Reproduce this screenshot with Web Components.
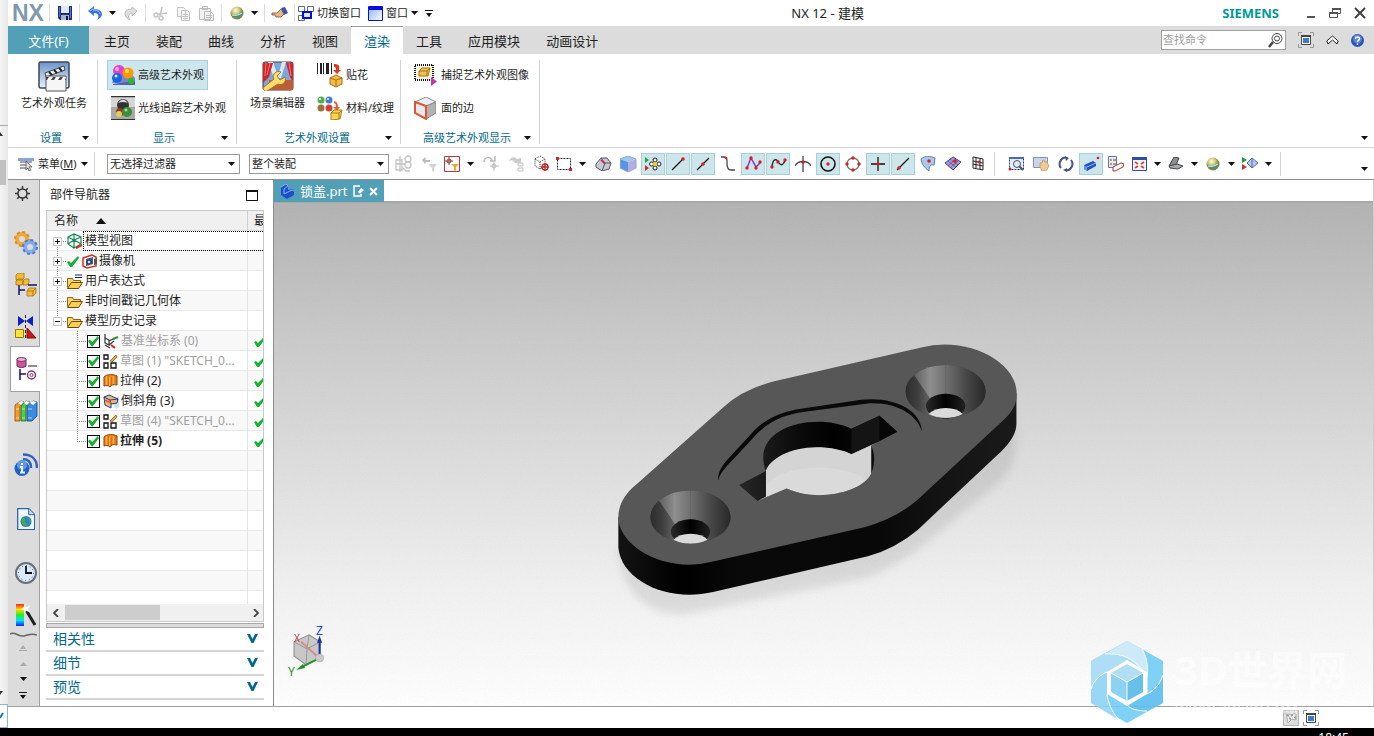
<!DOCTYPE html>
<html lang="zh-CN">
<head>
<meta charset="utf-8">
<title>NX 12 - 建模</title>
<style>
  html, body {
    margin: 0;
    height: 100%;
  }

  body {
    --teal: #529fb8;
    --link: #00688b;
    --bar: #dcdcdc;
    --line: #d4d4d4;
    --hot: #cde6eb;
    --hot-edge: #a6d1dc;
    font: 12px/16px "Noto Sans", "Noto Sans CJK SC", sans-serif;
    color: #1e1e1e;
    background: #000;
    overflow: hidden;
  }
</style>
</head>
<body>
<nx-desktop></nx-desktop>

<script>
// name: [width, height, markup]
const ICONS = {
  caret: [7, 4, '<path d="M0 0h7L3.500 4z" fill="#111"/>'],
  caretUp: [7, 4, '<path d="M0 4h7L3.500 0z" fill="#aaa"/>'],
  sortUp: [10, 6, '<path d="M0 6h10L5 0z" fill="#111"/>'],
  overflow: [8, 7, '<path d="M0 0h8v1H0zM1 3h6L4 7z" fill="#111"/>'],
  overflowUp: [8, 6, '<path d="M0 5h8v1H0zM1 4h6L4 0z" fill="#aaa"/>'],
  save: [14, 14, '<path d="M0 0h14v14H2l-2-2z" fill="#1c2c80"/><path d="M3 0h8v7H3z" fill="#dfe9f8"/><path d="M1 1h1v10H1zM12 1h1v11h-1z" fill="#5878d8"/><path d="M3 9h8v5H3z" fill="#a9b4c8"/><path d="M8 10h2v4H8z" fill="#10184a"/>'],
  undo: [14, 14, '<path d="M0 5l6-5v3c6 0 8 3 8 5 0 3-3 5-5 6 3-4 1-7-3-7v3z" fill="#3a78d8"/><path d="M2 5l3-2v1c5 0 7 2 7 4" fill="none" stroke="#9cc4f6"/>'],
  redo: [14, 14, '<path d="M13 5L8 1v2C3 3 1 5 1 8c0 3 3 5 5 6-3-4-1-7 2-7v3z" fill="#dedede" stroke="#bbb"/>'],
  cut: [15, 15, '<g fill="none" stroke="#c6c6c6" stroke-width="1.500"><circle cx="3" cy="9" r="2"/><circle cx="8" cy="12" r="2"/><path d="M5 8l9-1M7 10L9 1"/></g>'],
  copy: [15, 15, '<g fill="#f5f5f5" stroke="#c2c2c2"><path d="M1.500 1.500h6l2 2v7h-8zM5.500 4.500h6l2 2v8h-8z"/><path d="M7 8.500h5M7 10.500h5M7 12.500h5"/></g>'],
  paste: [15, 15, '<g fill="#f2f2f2" stroke="#bcbcbc"><path d="M.5 2.500h11v11H.5zM3.500.5h5v3h-5zM5.500 5.500h6l3 3v6h-9z"/><path d="M7 9.500h6M7 11.500h6"/></g>'],
  sphere: [14, 14, '<defs><radialGradient id="g" cx=".4" cy=".3"><stop offset="0" stop-color="#fffce0"/><stop offset=".6" stop-color="#c8c870"/><stop offset="1" stop-color="#85853c"/></radialGradient></defs><circle cx="7" cy="7" r="6.500" fill="url(#g)"/><path d="M1 8c4 2 8 1 12-2-1 2-1 3-2 4-3 3-7 2-10-2z" fill="#3f8f9a"/><path d="M2 9c4 1 7 0 10-2" stroke="#d8f2ee" fill="none"/>'],
  hand: [17, 12, '<path d="M10 1l4-1 3 6-4 2z" fill="#3454b4"/><path d="M1 6h5l4-4 3 5-3 3H5L4 8H1z" fill="#e6b98a" stroke="#7d4c28" stroke-width=".8"/>'],
  switchWin: [16, 15, '<g fill="#fff" stroke="#556a94"><path d="M.5.5h6v5h-6zM9.500.5h6v5h-6zM.5 9.500h6v5h-6z"/></g><path d="M5 6h8v6H5z" fill="#dfe8ff" stroke="#0010e0" stroke-width="2"/>'],
  window: [15, 15, '<defs><linearGradient id="g" x2="1" y2="1"><stop offset="0" stop-color="#86aef0"/><stop offset="1" stop-color="#fff"/></linearGradient></defs><path d="M.5.5h14v14H.5z" fill="url(#g)" stroke="#0010e0"/><path d="M1 1h13v3H1z" fill="#0010e0"/>'],
  minimize: [9, 12, '<path d="M0 9h8v2H0z" fill="#555"/>'],
  restore: [12, 11, '<g fill="#fff" stroke="#555"><path d="M3.500.5h8v5h-8z"/><path d="M.5 4.500h8v5h-8z"/></g><path d="M3 0h9v2H3zM0 4h9v2H0z" fill="#555"/>'],
  close: [12, 12, '<path d="M1 1l10 10M11 1L1 11" stroke="#444" stroke-width="2"/>'],
  search: [15, 15, '<g fill="none" stroke="#444"><circle cx="9" cy="5.500" r="5"/><circle cx="9" cy="5.500" r="2.500"/></g><path d="M5 9l-4 5" stroke="#444" stroke-width="2.500"/>'],
  fullscreen: [16, 16, '<path d="M.5 4V.5H4M12 .5h3.500V4M15.500 12v3.500H12M4 15.500H.5V12" fill="none" stroke="#999"/><path d="M3.500 3.500h9v9h-9z" fill="#fff" stroke="#444"/><path d="M3 3h10v2H3z" fill="#444"/><path d="M5 6h6v5H5z" fill="#3d79c8"/>'],
  collapse: [13, 10, '<path d="M.8 6l5.700-5 5.700 5-1.200 3-4.500-4L2 9z" fill="#fff" stroke="#222"/>'],
  help: [13, 13, '<circle cx="6.500" cy="6.500" r="6.500" fill="#2c53b8"/><circle cx="6.500" cy="5" r="4.500" fill="#5681da"/><path d="M4.500 5c0-3 4.500-2.500 4 0-.3 1.300-2 1.300-2 3M6.500 9.500v1.500" fill="none" stroke="#fff" stroke-width="1.500"/>'],

  artTask: [32, 31, '<defs><linearGradient id="g" y2="1" x2="0"><stop offset="0" stop-color="#6a94cc"/><stop offset="1" stop-color="#e8f2fc"/></linearGradient></defs><rect x="1" y="1" width="30" height="26" rx="2" fill="url(#g)" stroke="#3f4756" stroke-width="1.500"/><path d="M7 12L26 5l1 4-19 7z" fill="#eee" stroke="#444"/><path d="M11 11l3 3M16 9l3 3M21 7l3 3" stroke="#222" stroke-width="2"/><path d="M8 15h20v15H8z" fill="#f6f6f6" stroke="#555"/><path d="M8 16h20v3H8z" fill="#444"/><path d="M11 16l-2 3h4l2-3zM18 16l-2 3h4l2-3zM25 16l-2 3h4l1-3z" fill="#fff"/>'],
  artAdv: [24, 22, '<path d="M1 19l5-11 10-3 8 9v6z" fill="#7986c9"/><path d="M2 20l22-3v4H2z" fill="#5360aa"/><circle cx="8" cy="7" r="6" fill="#df42c4"/><circle cx="6" cy="5" r="2" fill="#ff9bef"/><circle cx="17" cy="9" r="5.500" fill="#ff9800"/><circle cx="16" cy="7" r="2" fill="#ffe35c"/><circle cx="6" cy="14" r="5" fill="#1565e4"/><circle cx="5" cy="12" r="1.500" fill="#cce8ff"/><circle cx="20" cy="17" r="3" fill="#20c020"/>'],
  rayTrace: [24, 24, '<path d="M0 0h24v24H0z" fill="#a9a9a9"/><path d="M0 2h24v9H0z" fill="#d6d6d6"/><path d="M0 0h24v1H0zM0 23h24v1H0z" fill="#333"/><circle cx="12" cy="9" r="6" fill="#333"/><path d="M7 7q5-7 10 0-5-2-10 0z" fill="#ddd"/><circle cx="9" cy="16" r="4" fill="#9b332b"/><circle cx="16" cy="16" r="5" fill="#3c8e3c"/><circle cx="8" cy="18" r="3" fill="#e4cf4c"/><circle cx="15" cy="14" r="1.500" fill="#9fe09a"/>'],
  scene: [32, 30, '<rect x="1" y="1" width="30" height="28" rx="2" fill="#7ba7dd" stroke="#4b3538"/><path d="M11 1l5 14 4-14h4l-5 16h-7L6 1z" fill="#d7e9fb"/><path d="M1 2h10l-4 14-6 6zM31 2H24l4 14 3 5z" fill="#d4232b"/><path d="M4 2L3 15M8 2L5 14M27 2l2 13" stroke="#ff796d"/><path d="M7 19h24v10H7z" fill="#bd5d36"/><path d="M2 26L12 18c-3-5 3-9 7-7l-4 4 3 4 5-3c2 5-3 9-7 7L5 30c-2 1-5-2-3-4z" fill="#ffdc70" stroke="#a87818"/>'],
  decal: [26, 25, '<path d="M0 0h1v11H0zM3 0h2v11H3zM6 0h1v11H6zM9 0h3v11H9zM14 0h1v11h-1z" fill="#222"/><path d="M17 1c5 0 6 2 5 6h2l-4 4-4-4h3c0-2 0-3-2-3z" fill="#d83a24"/><path d="M13 15l6-3 6 3v6l-6 3-6-3z" fill="#f5bb46" stroke="#a87011"/><path d="M13 15l6 2 6-2M19 17v7" fill="none" stroke="#a87011"/>'],
  material: [26, 24, '<circle cx="4" cy="4" r="3.500" fill="#4fae4d"/><circle cx="12" cy="4" r="3.500" fill="#3f80ca"/><circle cx="4" cy="12" r="3.500" fill="#9a7338"/><circle cx="12" cy="12" r="3.500" fill="#d23d34"/><circle cx="3" cy="3" r="1" fill="#fff"/><circle cx="11" cy="3" r="1" fill="#fff"/><path d="M17 5c4 1 4 4 4 6h2l-3 4-4-4h3c0-2 0-3-2-4z" fill="#de6040"/><path d="M14 17l3-3h8l-2 9-9 1z" fill="#fbd64c" stroke="#a87d14"/><path d="M14 17h8v6M22 17l3-3" fill="none" stroke="#a87d14"/>'],
  capture: [24, 22, '<path d="M1 1h18v15H1z" fill="#f8f4e4" stroke="#111" stroke-width="2" stroke-dasharray="1 1"/><path d="M5 7l3-3h8l-2 8H5z" fill="#efc14e" stroke="#a87412"/><path d="M5 7h8v5M13 7l3-3" fill="none" stroke="#a87412"/><path d="M17 13l6 4.500-6 4.500z" fill="#b83ca8"/>'],
  faceEdge: [22, 23, '<path d="M1 5l11-5 10 5-10 4z" fill="#ececf4" stroke="#888"/><path d="M12 9l10-4v11l-10 6z" fill="#b2b2b2" stroke="#888"/><path d="M1 5l11 4v13L1 16z" fill="#e9e9e9" stroke="#dd5536" stroke-width="2"/>'],

  menu: [16, 14, '<path d="M2 5h12M2 8h8M2 11h8" stroke="#888" stroke-width="1.500"/><path d="M0 1h16v3H0z" fill="#8aa5dc"/><path d="M8 4l6 6h-3l2 3-2 1-1-3-2 2z" fill="#ddd" stroke="#555" stroke-width=".8"/>'],
  f1: [18, 18, '<g fill="none" stroke="#c4c4c4" stroke-width="1.300"><path d="M1 5h6v10H1zM5 1v16M1 9h9M7 12l4 4h4"/><circle cx="13" cy="4" r="3"/><circle cx="13" cy="10" r="3"/></g>'],
  f2: [17, 17, '<path d="M1 5l3-3 1 3h4v2H5L4 9z" fill="#bbb"/><path d="M7 9h9l-3 4v4l-2-1v-3z" fill="#d4d4d4"/>'],
  f3: [16, 16, '<path d="M.5.5h15v15H.5z" fill="#fff" stroke="#c83238"/><g fill="none" stroke="#884438"><circle cx="5" cy="5" r="2"/><path d="M5 1v8M1 5h8"/></g><path d="M7 8h8l-3 3v4l-2-1v-3z" fill="#e8ac28"/>'],
  f4: [17, 17, '<path d="M1 7C1 2 7 1 9 5l-2 1h5V1" fill="none" stroke="#bbb" stroke-width="1.500"/><path d="M11 7v9M7 11h9" stroke="#bbb"/><circle cx="11" cy="11" r="2" fill="none" stroke="#bbb"/>'],
  f5: [17, 17, '<path d="M1 6C3 1 7 2 9 4l4-1v5H7L4 5z" fill="#ccc"/><path d="M10 8h5v3h-5zM10 13h5v3h-5z" fill="none" stroke="#c4c4c4"/>'],
  f6: [17, 17, '<path d="M2 4l5-3 5 3v7l-5 3-5-3zM2 4l5 3 5-3M7 7v7" fill="none" stroke="#333" stroke-dasharray="1 1"/><g fill="none" stroke="#c02828" stroke-width="1.300"><circle cx="12" cy="12" r="3"/><path d="M12 8v8M8 12h8"/></g>'],
  f7: [17, 14, '<path d="M1.500 1.500h13v11h-13z" fill="none" stroke="#222" stroke-dasharray="2 1"/><path d="M0 0h3v3H0zM13 11h3v3h-3z" fill="#d82222"/>'],
  f8: [17, 14, '<path d="M1 7l5-6h6l4 5-2 6-7 2-6-4z" fill="#c4c9d8" stroke="#556"/><path d="M6 1l4 5h6M10 6l-3 8" fill="none" stroke="#556"/><path d="M6 3l4 4" stroke="#d02828" stroke-width="1.500"/>'],
  f9: [17, 16, '<path d="M0 3l8-3 8 3-8 3z" fill="#9fc6f5"/><path d="M0 3l8 3v10l-8-4z" fill="#5c93e2"/><path d="M16 3L8 6v10l8-4z" fill="#b4aee2"/><path d="M0 3l8-3 8 3v9l-8 4-8-4z" fill="none" stroke="#87a7d5"/>'],
  s1: [17, 16, '<path d="M0 1l4 3-4 3z" fill="#1aa832"/><path d="M0 9l4 3-4 3z" fill="#d02828"/><g fill="#fff" stroke="#222"><circle cx="10" cy="4" r="2"/><circle cx="10" cy="12" r="2"/><circle cx="6.500" cy="8" r="2"/><circle cx="14" cy="8" r="2"/></g><circle cx="10" cy="8" r="2" fill="#f5d010"/>'],
  s2: [14, 14, '<path d="M1 13L12 2" stroke="#111" stroke-width="1.300"/><circle cx="12" cy="2" r="1.800" fill="#d42020"/>'],
  s3: [14, 14, '<path d="M1 13L13 1" stroke="#111" stroke-width="1.300"/><circle cx="7" cy="7" r="1.800" fill="#d42020"/>'],
  s4: [14, 15, '<path d="M0 1h3c3 0 3 2 3 6s1 7 4 7h4" fill="none" stroke="#444" stroke-width="1.300"/><circle cx="5" cy="2" r="1.300" fill="#d42020"/>'],
  s5: [17, 15, '<path d="M2 12L6 2l5 9 4-4" fill="none" stroke="#8a32d0" stroke-width="1.500"/><g fill="#d42020"><circle cx="2" cy="12" r="1.700"/><circle cx="6" cy="2" r="1.700"/><circle cx="11" cy="12" r="1.700"/><circle cx="15" cy="6" r="1.700"/></g>'],
  s6: [17, 13, '<path d="M2 10C3 0 7 2 9 6c2 3 5 2 6-3" fill="none" stroke="#222" stroke-width="1.300"/><g fill="#d42020"><circle cx="2" cy="10" r="1.700"/><circle cx="8" cy="5" r="1.700"/><circle cx="15" cy="3" r="1.700"/></g>'],
  s7: [16, 16, '<path d="M8 0v16M0 10C3 4 13 4 16 10" fill="none" stroke="#444" stroke-width="1.300"/><circle cx="8" cy="6" r="1.700" fill="#d42020"/>'],
  s8: [16, 16, '<circle cx="8" cy="8" r="7" fill="none" stroke="#111" stroke-width="1.500"/><circle cx="8" cy="8" r="1.700" fill="#d42020"/>'],
  s9: [16, 16, '<circle cx="8" cy="8" r="6" fill="none" stroke="#777" stroke-width="1.300"/><g fill="#d42020"><circle cx="8" cy="2" r="1.700"/><circle cx="8" cy="14" r="1.700"/><circle cx="2" cy="8" r="1.700"/><circle cx="14" cy="8" r="1.700"/></g>'],
  s10: [14, 14, '<path d="M7 0v14M0 7h14" stroke="#111" stroke-width="1.300"/><circle cx="7" cy="7" r="1.700" fill="#d42020"/>'],
  s11: [14, 14, '<path d="M1 13L13 1" stroke="#111" stroke-width="1.300"/><circle cx="3" cy="11" r="1.800" fill="#d42020"/>'],
  s12: [16, 15, '<path d="M1 3c5-4 9-3 14-1l-1 7c-4-1-5 2-5 6C4 11 2 9 1 3z" fill="#a9c8ec" stroke="#5c81b0"/><circle cx="9" cy="5" r="1.800" fill="#d42020"/>'],
  s13: [16, 15, '<path d="M0 7l8-6 8 5-8 8z" fill="#a89cdc" stroke="#4d4280"/><path d="M3 5l8 6M5 3l8 6M3 10l8-7M5 12l8-7" stroke="#4d4280" stroke-width=".7"/><circle cx="10" cy="5" r="1.800" fill="#d42020"/>'],
  s14: [12, 15, '<path d="M1 1l10 2v11L1 12zM4 1v11M8 2v11M1 5l10 2M1 8l10 2" fill="none" stroke="#222"/><circle cx="7" cy="6" r="1.500" fill="#d42020"/>'],
  v1: [17, 15, '<path d="M1.500 1.500h14v12h-14z" fill="#e3edfb" stroke="#203890" stroke-dasharray="2 1"/><path d="M1 1h15v2H1z" fill="#4868c4"/><circle cx="9" cy="8" r="3.500" fill="#d8f0f0" stroke="#555"/><path d="M11 10l4 4" stroke="#555" stroke-width="2"/><circle cx="2" cy="13" r="1.500" fill="#d42020"/>'],
  v2: [17, 15, '<path d="M.5 1.500h14v10H.5z" fill="#c8d5ec" stroke="#8193b8"/><path d="M7 11V7h2l1-3h1l1 2h2l2 4-3 5H9z" fill="#edca96" stroke="#b98a50" stroke-width=".7"/>'],
  v3: [16, 16, '<path d="M3 12A6.500 6.500 0 0 1 8 1.500M13 4A6.500 6.500 0 0 1 8 14.500" fill="none" stroke="#44557e" stroke-width="2"/><path d="M7 0l4 2-3 3zM9 12v4l-4-2z" fill="#44557e"/>'],
  v4: [17, 16, '<path d="M1 9l9-4 3 2v3l-9 5-3-2z" fill="#2452c4"/><path d="M1 9l3 2v4l-3-2z" fill="#6c92ea"/><path d="M4 11l9-4" stroke="#9ab8fa"/><circle cx="15" cy="2" r="1.300" fill="#d42020"/>'],
  v5: [16, 16, '<path d="M.5.5h8v11h-8z" fill="#e6e8fa" stroke="#6870b0"/><path d="M2 3h2v2H2zM2 7h2v2H2z" fill="#c8a024"/><path d="M5 4h3M5 8h3" stroke="#555"/><path d="M5 11l8-4 3 1-1 3-8 4H5z" fill="#fff" stroke="#a83434"/>'],
  v6: [15, 14, '<path d="M.5.500h14v13H.5z" fill="#f0f4fc" stroke="#2950a4"/><path d="M0 0h15v3H0z" fill="#2950a4"/><path d="M3 5l3 2M12 5L9 7M3 11l3-2M12 11L9 9" stroke="#dd4422" stroke-width="1.800"/>'],
  v7: [16, 13, '<path d="M1 9L6 0l5 1-3 7z" fill="#8c8f90" stroke="#444"/><path d="M1 9l8-2 6 2-5 3-8-1z" fill="#a8abac" stroke="#444"/>'],
  v8: [17, 13, '<path d="M0 0l5 3-5 3z" fill="#18a030"/><path d="M0 7l5 3-5 3z" fill="#d03030"/><path d="M5 6l5-5 6 5-6 5z" fill="#b6c8ec" stroke="#5068a0"/><path d="M10 1v10" stroke="#5068a0"/>'],

  gear: [15, 15, '<circle cx="7.500" cy="7.500" r="4.500" fill="none" stroke="#333" stroke-width="1.500"/><path d="M7.500 0v3M7.500 12v3M0 7.500h3M12 7.500h3M2.200 2.200l2 2M10.800 10.800l2 2M12.800 2.200l-2 2M4.200 10.800l-2 2" stroke="#333" stroke-width="1.500"/>'],
  gears: [24, 24, '<circle cx="8" cy="8" r="5" fill="none" stroke="#eea93a" stroke-width="4"/><circle cx="8" cy="8" r="7" fill="none" stroke="#dc8b25" stroke-width="2" stroke-dasharray="3 2.500"/><circle cx="16" cy="16" r="5" fill="none" stroke="#84abec" stroke-width="4"/><circle cx="16" cy="16" r="7" fill="none" stroke="#4b79cc" stroke-width="2" stroke-dasharray="3 2.500"/>'],
  assembly: [22, 24, '<path d="M4 12v10M4 17h6M13 12h9" stroke="#101070" stroke-width="1.500"/><g fill="#f7ba34" stroke="#9a680f" stroke-width=".7"><path d="M1 2l2-2h6v5L7 7H1zM1 8l2-2h5v4l-1 2H1zM8 8l2-2h4v4l-2 2H8zM12 18l2-3h7v5l-3 3h-6z"/><path d="M12 18h6v5M18 18l3-3" fill="none"/></g>'],
  constraint: [22, 24, '<path d="M3 1l7 5-7 5zM18 1l-7 5 7 5z" fill="#1020c0"/><path d="M10.500 0v24" stroke="#222" stroke-dasharray="3 2"/><path d="M.5 14.500h8v8h-8z" fill="#ffe438" stroke="#a07800"/><path d="M12 13l9 10h-9z" fill="#cf1616" stroke="#7e0909"/>'],
  partNav: [21, 24, '<path d="M1 2v7c2 2 7 2 9 0V2z" fill="#c65a9c" stroke="#7a2860"/><ellipse cx="5.500" cy="2.500" rx="4.500" ry="2" fill="#eab2d6" stroke="#7a2860"/><path d="M12 9h9" stroke="#222"/><path d="M4 12v11M4 17h6" stroke="#101070" stroke-width="1.500"/><circle cx="15.500" cy="18" r="4" fill="#fff" stroke="#8a3870" stroke-width="1.500"/><circle cx="15.500" cy="18" r="1.500" fill="none" stroke="#8a3870"/>'],
  books: [24, 22, '<g stroke-width=".8"><path d="M1 5l6-4 3 1-4 4v15H1z" fill="#f3992b" stroke="#944b0d"/><path d="M7 6l5-5 4 1-4 4v15H7z" fill="#52c94a" stroke="#18701a"/><path d="M13 6l6-5 4 1v14l-5 5h-5z" fill="#3b8ce0" stroke="#143f86"/></g><path d="M4 3l3-2 3 1-3 3zM10 3l2-2 4 1-3 3zM16 3l3-2 4 1-4 3z" fill="#fff"/><path d="M2 9h3M8 9h3M14 9h4M2 18h3M8 18h3M14 18h4" stroke="#fff" opacity=".6"/>'],
  info: [24, 24, '<circle cx="8" cy="15.500" r="7.500" fill="#1d62c8"/><circle cx="8" cy="12" r="5" fill="#5b9ae6"/><path d="M8 10v2M6 14h2v5M6 19.500h5" stroke="#fff" stroke-width="2" fill="none"/><path d="M9 6c5 0 8 3 8 9M9 1.500c9 0 14 5 14 13.500" fill="none" stroke="#3064bc" stroke-width="2.500"/>'],
  web: [18, 22, '<path d="M.7.700h11l6 6v15H.7z" fill="#f2f7ff" stroke="#2862ac" stroke-width="1.300"/><path d="M11.700.7v6h6" fill="#c8dcf5" stroke="#2862ac"/><circle cx="9" cy="13.500" r="5.500" fill="#2d84be"/><path d="M5 11c2-3 4 0 3 2s3 2 2 5c-4 0-6-3-5-7zM11 9l3 3-2 2z" fill="#45ac48"/>'],
  clock: [22, 22, '<circle cx="11" cy="11" r="10" fill="#d9e8fa" stroke="#696e76" stroke-width="2"/><circle cx="11" cy="11" r="7.500" fill="none" stroke="#456" stroke-dasharray="1 2.900"/><path d="M11 4v7h6" fill="none" stroke="#111" stroke-width="1.800"/>'],
  palette: [20, 24, '<defs><linearGradient id="g" x2="0" y2="1"><stop offset="0" stop-color="#f22"/><stop offset=".25" stop-color="#fd0"/><stop offset=".5" stop-color="#2e2"/><stop offset=".75" stop-color="#0df"/><stop offset="1" stop-color="#12e"/></linearGradient></defs><path d="M0 1h8v22H0z" fill="url(#g)"/><path d="M10 7l9 15" stroke="#222" stroke-width="3"/><path d="M9 1l1 3 4-1-2 3 2 3-4-1-2 3V7L5 6l3-2z" fill="#fff"/>'],
  squiggle: [27, 6, '<path d="M0 2c5-3 8 3 14 2 5-1 7-3 13-1" fill="none" stroke="#666" stroke-width="1.500"/>'],

  modelView: [16, 16, '<path d="M1 4l6-3 7 3v7l-7 4-6-4zM1 4l6 3 7-3M7 7v8M7 1v6M1 11l6-4 7 4" fill="none" stroke="#168653" stroke-width="1.200"/><path d="M9 15l6-3" stroke="#d83020" stroke-width="2"/>'],
  tick: [12, 11, '<path d="M0 6l2-1 2 2 7-7 1 2-7 9H3z" fill="#16b034"/>'],
  camera: [15, 15, '<path d="M1 4l9-3 4 2v9l-9 2-4-2z" fill="#fff" stroke="#d03218" stroke-width="1.500"/><path d="M4 5l7-2v7l-7 2z" fill="#43539b"/><circle cx="7" cy="8" r="2" fill="#d7dcf8" stroke="#222"/><path d="M12 5l3-1v6l-3 1z" fill="#555"/>'],
  folder: [16, 13, '<path d="M.5 11.500v-9h5l1 2h7v2" fill="#f8d46e" stroke="#8e6410"/><path d="M.5 12.500l4-6h11l-4 6z" fill="#ffd04f" stroke="#6c480a"/>'],
  folderEq: [16, 15, '<path d="M.5 13.500v-9h5l1 2h7v2" fill="#f8d46e" stroke="#8e6410"/><path d="M.5 14.500l4-6h11l-4 6z" fill="#ffd04f" stroke="#6c480a"/><path d="M8 1h7M8 3.500h7" stroke="#102080"/>'],
  csys: [16, 15, '<path d="M2 0v4l4 2v5l-4-2V4M2 11l5 3M6 7l6-3M6 11l5-4" fill="none" stroke="#333" stroke-width="1.200"/><path d="M10 5l5-2" stroke="#23963a" stroke-width="2"/><path d="M8 11l4 3" stroke="#c02828" stroke-width="2"/>'],
  sketch: [15, 15, '<g fill="none" stroke="#111" stroke-width="1.300"><path d="M1 1h4v4H1zM1 9h4v5H1zM8 9h5v5H8z"/></g><path d="M7 7l6-6 1 2-5 5z" fill="#e9ae28" stroke="#844" stroke-width=".7"/>'],
  extrude: [15, 14, '<path d="M1 3c3-3 9-3 13-1v9c-4-1-6 0-7 2-2-2-4-2-6-1z" fill="#f38b1d" stroke="#8c3c08"/><path d="M4 2v9M7 3v9M11 2v8" stroke="#ffe05b"/><path d="M5 2v9M8 3v9M12 2v8" stroke="#b83414" stroke-width=".7"/>'],
  chamfer: [16, 15, '<path d="M8 7l8-5v11l-3 2z" fill="#cfdcf8"/><path d="M1 3l5-2 9 4-1 4-6 1v4l-6-3z" fill="#f7ba59" stroke="#1b3cb0"/><path d="M1 3l6 3 8-1M7 6l1 4" fill="none" stroke="#1b3cb0"/><path d="M2 6l6 3" stroke="#e05634" stroke-width="1.500"/>'],
  panelMax: [12, 11, '<path d="M.5.5h11v10H.5z" fill="none" stroke="#111"/><path d="M0 0h12v2H0z" fill="#111"/>'],
  chevron: [11, 9, '<path d="M0 0h3l2.500 5L8 0h3L6.500 9h-2z" fill="#00688b"/>'],
  left: [6, 8, '<path d="M5 0L1 4l4 4" fill="none" stroke="#444" stroke-width="1.800"/>'],
  right: [6, 8, '<path d="M1 0l4 4-4 4" fill="none" stroke="#444" stroke-width="1.800"/>'],
  part: [15, 15, '<path d="M1 3l5-3 2 2v4l5-1 1 2v4l-7 4-6-4z" fill="#1c4fce"/><path d="M1 3l5-3 2 2-4 3v5l8-4 2 1" fill="none" stroke="#8bb2fa"/>'],
  edited: [11, 12, '<path d="M7 1H1v10h7V9" fill="none" stroke="#fff" stroke-width="1.500"/><path d="M5 7l3-4 3 2-4 4z" fill="#fff"/>'],
  tabClose: [9, 9, '<path d="M1 1l7 7M8 1L1 8" stroke="#fff" stroke-width="2"/>'],
  flags: [16, 16, '<path d="M.5.500h15v15H.5z" fill="#dedede" stroke="#b4b4b4"/><path d="M3 3l5 2 5-2v7L9 9l-4 4z" fill="#f2f2f2" stroke="#aaa"/><path d="M4 4l2 1v2L4 6zM8 5l2-1v2L8 7zM6 7l2 1v2L6 9zM11 7l2-1v3l-2-1z" fill="#999"/>']
};

const define = (name, html, setup) => {
  const template = document.createElement('template');
  template.innerHTML = html;
  customElements.define(name, class extends HTMLElement {
    connectedCallback() {
      if (this.shadowRoot) return;
      this.attachShadow({ mode: 'open' }).append(template.content.cloneNode(true));
      if (setup) setup(this, this.shadowRoot);
    }
  });
};

define('nx-icon', `
  <style>
    :host { display: inline-flex; flex: none; }
    svg { display: block; }
  </style>
  <svg aria-hidden="true"></svg>
`, (host, root) => {
  const [w, h, markup] = ICONS[host.getAttribute('name')];
  const svg = root.querySelector('svg');
  svg.setAttribute('viewBox', `0 0 ${w} ${h}`);
  svg.setAttribute('width', w);
  svg.setAttribute('height', h);
  svg.innerHTML = markup;
});

// Square tool button; "drop" adds the little caret, "on" the pressed look.
define('nx-tool', `
  <style>
    :host { display: inline-flex; flex: none; }
    button {
      display: flex;
      align-items: center;
      justify-content: center;
      box-sizing: border-box;
      width: var(--tool-width, 24px);
      height: 22px;
      padding: 0;
      border: 1px solid transparent;
      background: none;
    }
    :host([on]) button { background: var(--hot); border-color: var(--hot-edge); }
    .drop { display: none; width: 15px; }
    :host([drop]) { gap: 1px; }
    :host([drop]) button { width: 20px; }
    :host([drop]) .drop { display: flex; width: 15px; }
  </style>
  <button class="main" type="button"></button>
  <button class="drop" type="button" aria-label="更多"><nx-icon name="caret"></nx-icon></button>
`, (host, root) => {
  const name = host.getAttribute('name');
  const main = root.querySelector('.main');
  main.setAttribute('aria-label', name);
  main.innerHTML = `<nx-icon name="${name}"></nx-icon>`;
});

define('nx-quick-bar', `
  <style>
    :host {
      display: flex;
      align-items: center;
      height: 26px;
      padding: 0 8px 0 4px;
      background: #fff;
      --tool-width: 23px;
    }
    .logo { width: 34px; font: bold 23px/26px "Liberation Sans", sans-serif; color: #8199aa; }
    i { width: 1px; height: 18px; margin: 0 3px; background: #ddd; }
    button { display: flex; align-items: center; gap: 3px; padding: 0; border: 0; background: none; font: 11px/16px "Noto Sans", "Noto Sans CJK SC", sans-serif; color: inherit; }
    .caret { width: 13px; justify-content: center; }
    .group { display: flex; align-items: center; gap: 7px; }
    h1 { flex: 1; margin: 0; text-align: center; font: inherit; font-size: 13px; }
    .brand { margin-right: 28px; font-weight: bold; font-size: 13px; color: #009999; }
    .controls { display: flex; gap: 13px; }
  </style>
  <span class="logo">NX</span><i></i>
  <nx-tool name="save"></nx-tool><i></i>
  <nx-tool name="undo"></nx-tool>
  <button class="caret" aria-label="撤消列表"><nx-icon name="caret"></nx-icon></button>
  <nx-tool name="redo"></nx-tool><i></i>
  <nx-tool name="cut"></nx-tool><nx-tool name="copy"></nx-tool><nx-tool name="paste"></nx-tool><i></i>
  <nx-tool name="sphere"></nx-tool>
  <button class="caret" aria-label="渲染样式"><nx-icon name="caret"></nx-icon></button><i></i>
  <nx-tool name="hand"></nx-tool><i></i>
  <div class="group">
    <button><nx-icon name="switchWin"></nx-icon>切换窗口</button>
    <button><nx-icon name="window"></nx-icon>窗口<nx-icon name="caret"></nx-icon></button>
    <button aria-label="自定义"><nx-icon name="overflow"></nx-icon></button>
  </div>
  <h1>NX 12 - 建模</h1>
  <span class="brand">SIEMENS</span>
  <div class="controls">
    <button aria-label="最小化"><nx-icon name="minimize"></nx-icon></button>
    <button aria-label="还原"><nx-icon name="restore"></nx-icon></button>
    <button aria-label="关闭"><nx-icon name="close"></nx-icon></button>
  </div>
`);

define('nx-tab-bar', `
  <style>
    :host { display: flex; align-items: stretch; height: 28px; background: var(--bar); }
    nav { display: flex; flex: 1; }
    button { border: 0; padding: 0; background: none; font: inherit; color: inherit; }
    nav button { padding: 0 13px; font-size: 13px; border-top: 1px solid transparent; }
    nav .file { width: 81px; margin-right: 2px; padding: 0; background: var(--teal); color: #fff; }
    nav .active { background: #fff; color: var(--link); border-color: #999; }
    .side { display: flex; align-items: center; gap: 12px; padding-right: 10px; }
    .search { display: flex; align-items: center; box-sizing: border-box; width: 125px; height: 20px; padding: 0 2px 0 1px; border: 1px solid #a0a0a0; background: #fff; }
    input { flex: 1; min-width: 0; border: 0; padding: 0; background: none; font: inherit; font-size: 11px; outline: 0; }
    input::placeholder { color: #a0a0a0; }
    .side > button { display: flex; }
  </style>
  <nav>
    <button class="file">文件(F)</button>
    <button>主页</button><button>装配</button><button>曲线</button><button>分析</button><button>视图</button>
    <button class="active" aria-current="true">渲染</button>
    <button>工具</button><button>应用模块</button><button>动画设计</button>
  </nav>
  <div class="side">
    <label class="search"><input type="text" placeholder="查找命令" aria-label="查找命令"><nx-icon name="search"></nx-icon></label>
    <button aria-label="全屏"><nx-icon name="fullscreen"></nx-icon></button>
    <button aria-label="最小化功能区"><nx-icon name="collapse"></nx-icon></button>
    <button aria-label="帮助"><nx-icon name="help"></nx-icon></button>
  </div>
`);

define('nx-ribbon-group', `
  <style>
    :host { display: flex; flex-direction: column; box-sizing: border-box; height: 84px; border-right: 1px solid var(--line); }
    .body { display: flex; flex: 1; gap: 7px; }
    footer { display: flex; align-items: center; height: 12px; padding: 0 8px 0 0; color: var(--link); font-size: 11px; }
    span { flex: 1; text-align: center; }
    button { display: flex; padding: 0; border: 0; background: none; }
  </style>
  <div class="body"><slot></slot></div>
  <footer><span></span><button aria-label="组选项"><nx-icon name="caret"></nx-icon></button></footer>
`, (host, root) => {
  root.querySelector('span').textContent = host.getAttribute('label');
});

define('nx-ribbon-button', `
  <style>
    :host { display: flex; }
    button {
      display: flex;
      align-items: center;
      box-sizing: border-box;
      gap: 3px;
      height: 30px;
      padding: 0 3px;
      border: 1px solid transparent;
      background: none;
      color: inherit;
      font: 11px/16px "Noto Sans", "Noto Sans CJK SC", sans-serif;
      white-space: nowrap;
    }
    :host([on]) button { background: var(--hot); border-color: var(--hot-edge); }
    :host([big]) button { flex-direction: column; gap: 4px; height: 56px; padding: 0; }
    :host([big]) .glyph { height: 30px; }
    .glyph { display: flex; min-width: 24px; }
  </style>
  <button type="button"><span class="glyph"></span><slot></slot></button>
`, (host, root) => {
  root.querySelector('.glyph').innerHTML = `<nx-icon name="${host.getAttribute('icon')}"></nx-icon>`;
});

define('nx-ribbon', `
  <style>
    :host { display: flex; align-items: flex-start; box-sizing: border-box; height: 94px; padding-top: 6px; border-bottom: 1px solid var(--line); background: #fff; }
    .stack { display: flex; flex-direction: column; gap: 3px; }
    nx-ribbon-group { padding-left: 12px; }
    .task { width: 90px; }
    .show { width: 139px; padding-left: 9px; }
    .setup { width: 164px; }
    .extra { width: 139px; padding-left: 9px; }
    .more { display: flex; align-self: flex-end; margin: 0 6px 7px auto; padding: 0; border: 0; background: none; }
  </style>
  <nx-ribbon-group class="task" label="设置">
    <nx-ribbon-button big icon="artTask">艺术外观任务</nx-ribbon-button>
  </nx-ribbon-group>
  <nx-ribbon-group class="show" label="显示">
    <div class="stack">
      <nx-ribbon-button on icon="artAdv">高级艺术外观</nx-ribbon-button>
      <nx-ribbon-button icon="rayTrace">光线追踪艺术外观</nx-ribbon-button>
    </div>
  </nx-ribbon-group>
  <nx-ribbon-group class="setup" label="艺术外观设置">
    <nx-ribbon-button big icon="scene">场景编辑器</nx-ribbon-button>
    <div class="stack">
      <nx-ribbon-button icon="decal">贴花</nx-ribbon-button>
      <nx-ribbon-button icon="material">材料/纹理</nx-ribbon-button>
    </div>
  </nx-ribbon-group>
  <nx-ribbon-group class="extra" label="高级艺术外观显示">
    <div class="stack">
      <nx-ribbon-button icon="capture">捕捉艺术外观图像</nx-ribbon-button>
      <nx-ribbon-button icon="faceEdge">面的边</nx-ribbon-button>
    </div>
  </nx-ribbon-group>
  <button class="more" aria-label="功能区选项"><nx-icon name="caret"></nx-icon></button>
`);

define('nx-select', `
  <style>
    :host { display: grid; align-items: center; height: 20px; }
    select, nx-icon { grid-area: 1 / 1; }
    select { appearance: none; box-sizing: border-box; width: 100%; height: 20px; padding: 0 20px 0 2px; border: 1px solid #999; border-radius: 0; background: #fff; color: inherit; font: 11px/16px "Noto Sans", "Noto Sans CJK SC", sans-serif; }
    nx-icon { justify-self: end; margin-right: 5px; pointer-events: none; }
  </style>
  <select><option></option></select>
  <nx-icon name="caret"></nx-icon>
`, (host, root) => {
  root.querySelector('select').setAttribute('aria-label', host.getAttribute('label'));
  root.querySelector('option').textContent = host.getAttribute('value');
});

define('nx-selection-bar', `
  <style>
    :host { display: flex; align-items: center; gap: 1px; box-sizing: border-box; height: 32px; padding: 0 6px 0 10px; border-bottom: 1px solid #8c8c8c; background: #fff; }
    .menu { display: flex; align-items: center; gap: 4px; width: 72px; padding: 0; border: 0; background: none; color: inherit; font: 11px/16px "Noto Sans", "Noto Sans CJK SC", sans-serif; white-space: nowrap; }
    i { width: 1px; height: 24px; margin: 0 8px 0 3px; background: var(--line); }
    nx-select { width: 133px; margin: 0 8px 0 3px; }
    nx-select + nx-select { width: 140px; margin: 0 2px 0 0; }
    .more { display: flex; align-self: flex-end; margin: 0 0 8px auto; padding: 0; border: 0; background: none; }
  </style>
  <button class="menu"><nx-icon name="menu"></nx-icon><span>菜单(<u>M</u>)</span><nx-icon name="caret"></nx-icon></button><i></i>
  <nx-select label="类型过滤器" value="无选择过滤器"></nx-select>
  <nx-select label="选择范围" value="整个装配"></nx-select>
  <nx-tool name="f1"></nx-tool>
  <nx-tool name="f2"></nx-tool>
  <nx-tool name="f3" drop></nx-tool>
  <nx-tool name="f4"></nx-tool>
  <nx-tool name="f5"></nx-tool>
  <nx-tool name="f6"></nx-tool>
  <nx-tool name="f7" drop></nx-tool>
  <nx-tool name="f8"></nx-tool>
  <nx-tool name="f9"></nx-tool>
  <nx-tool name="s1" on></nx-tool>
  <nx-tool name="s2" on></nx-tool>
  <nx-tool name="s3" on></nx-tool>
  <nx-tool name="s4"></nx-tool>
  <nx-tool name="s5" on></nx-tool>
  <nx-tool name="s6" on></nx-tool>
  <nx-tool name="s7"></nx-tool>
  <nx-tool name="s8" on></nx-tool>
  <nx-tool name="s9"></nx-tool>
  <nx-tool name="s10" on></nx-tool>
  <nx-tool name="s11" on></nx-tool>
  <nx-tool name="s12"></nx-tool>
  <nx-tool name="s13"></nx-tool>
  <nx-tool name="s14"></nx-tool><i></i>
  <nx-tool name="v1"></nx-tool>
  <nx-tool name="v2"></nx-tool>
  <nx-tool name="v3"></nx-tool>
  <nx-tool name="v4" on></nx-tool>
  <nx-tool name="v5"></nx-tool>
  <nx-tool name="v6" drop></nx-tool>
  <nx-tool name="v7" drop></nx-tool>
  <nx-tool name="sphere" drop></nx-tool>
  <nx-tool name="v8" drop></nx-tool><i></i>
  <button class="more" aria-label="工具条选项"><nx-icon name="caret"></nx-icon></button>
`);

define('nx-resource-rail', `
  <style>
    :host { display: flex; flex-direction: column; box-sizing: border-box; width: 32px; border-right: 1px solid #a0a0a0; background: var(--bar); }
    button { display: flex; align-items: center; justify-content: center; box-sizing: border-box; height: 42px; padding: 0 0 0 4px; border: 0; background: none; flex: none; }
    .gear { height: 26px; margin-bottom: 16px; padding: 0 2px 0 0; }
    .active { height: 46px; margin: -2px -1px -2px 2px; padding: 0 0 0 1px; border: 1px solid #a0a0a0; border-right: 0; background: #fff; }
    .apart { margin-top: 12px; }
    .scroll { display: flex; flex-direction: column; align-items: center; gap: 11px; margin-top: -4px; padding-right: 1px; }
    .scroll nx-icon:first-child { margin-bottom: -4px; }
  </style>
  <button class="gear" aria-label="设置"><nx-icon name="gear"></nx-icon></button>
  <button aria-label="装配导航器"><nx-icon name="gears"></nx-icon></button>
  <button aria-label="装配"><nx-icon name="assembly"></nx-icon></button>
  <button aria-label="约束导航器"><nx-icon name="constraint"></nx-icon></button>
  <button class="active" aria-label="部件导航器"><nx-icon name="partNav"></nx-icon></button>
  <button aria-label="重用库"><nx-icon name="books"></nx-icon></button>
  <button class="apart" aria-label="HD3D"><nx-icon name="info"></nx-icon></button>
  <button class="apart" aria-label="浏览器"><nx-icon name="web"></nx-icon></button>
  <button class="apart" aria-label="历史记录"><nx-icon name="clock"></nx-icon></button>
  <button aria-label="系统材料"><nx-icon name="palette"></nx-icon></button>
  <div class="scroll">
    <nx-icon name="squiggle"></nx-icon>
    <nx-icon name="overflowUp"></nx-icon>
    <nx-icon name="caretUp"></nx-icon>
    <nx-icon name="caret"></nx-icon>
    <nx-icon name="overflow"></nx-icon>
  </div>
`);

define('nx-tree-row', `
  <style>
    :host { display: flex; align-items: center; height: 20px; }
    .name { display: flex; align-items: center; box-sizing: border-box; flex: 1; min-width: 0; height: 100%; }
    .guide { flex: none; display: block; }
    .icons { display: flex; align-items: center; gap: 3px; flex: none; }
    .text { flex: 1; box-sizing: border-box; height: 20px; padding-left: 1px; line-height: 18px; border: 1px solid transparent; border-right: 0; white-space: nowrap; overflow: hidden; }
    .state { display: flex; align-items: center; box-sizing: border-box; width: 15px; height: 20px; padding-left: 6px; overflow: hidden; }
    :host([child]) .name { padding-left: 20px; }
    :host([dim]) { color: #a0a0a0; }
    :host([bold]) { font-weight: bold; }
    :host([focused]) .text { border: 1px dotted #000; border-right: 0; }
    :host([focused]) .state { border: dotted #000; border-width: 1px 0; }
    input { appearance: none; box-sizing: border-box; width: 13px; height: 13px; margin: 0; border: 1px solid #000; background: #fff; }
    input:checked::before { content: ""; display: block; width: 11px; height: 11px; background: #12b02c; clip-path: polygon(0 50%, 18% 36%, 38% 58%, 90% 5%, 100% 22%, 42% 100%, 30% 96%); }
  </style>
  <div class="name">
    <svg class="guide" width="20" height="20"></svg>
    <span class="icons"></span>
    <span class="text"><slot></slot></span>
  </div>
  <span class="state"></span>
`, (host, root) => {
  const get = (name) => host.getAttribute(name);
  const child = host.hasAttribute('child');
  const sign = get('sign');
  const from = host.hasAttribute('first') ? 10 : 0;
  const to = host.hasAttribute('last') ? 10 : 20;
  root.querySelector('svg').innerHTML = `
    <path d="M10.500 ${from}V${to}M10 10.500h10" fill="none" stroke="#888" stroke-dasharray="1 1"/>
    ${sign ? `<path d="M6.500 6.500h8v8h-8z" fill="#fff" stroke="#c4c4c4"/><path d="M8 10.500h5${sign === '+' ? 'M10.500 8v5' : ''}" stroke="#111"/>` : ''}`;
  const label = host.textContent;
  root.querySelector('.icons').innerHTML =
    (child ? `<input type="checkbox" checked aria-label='${label}'>` : '') +
    get('icons').split(' ').map((name) => `<nx-icon name="${name}"></nx-icon>`).join('');
  if (child) root.querySelector('.state').innerHTML = '<nx-icon name="tick"></nx-icon>';
});

define('nx-navigator', `
  <style>
    :host { display: flex; flex-direction: column; box-sizing: border-box; width: 233px; padding: 0 9px 6px 6px; background: #fff; }
    header { display: flex; align-items: center; justify-content: space-between; height: 30px; padding: 0 6px 0 4px; }
    h2 { margin: 0; font: inherit; }
    button { display: flex; align-items: center; padding: 0; border: 0; background: none; }
    .tree { display: flex; flex-direction: column; flex: 1; min-height: 0; border: 1px solid #c8c8c8; }
    .head { display: flex; align-items: center; height: 19px; background: #f0f0f0; border-bottom: 1px solid #d8d8d8; }
    .head div { display: flex; align-items: center; gap: 18px; box-sizing: border-box; flex: 1; height: 19px; padding-left: 7px; border-right: 1px solid #d0d0d0; }
    .head span { width: 15px; padding-left: 6px; box-sizing: border-box; overflow: hidden; white-space: nowrap; }
    .rows {
      flex: 1;
      min-height: 0;
      overflow: hidden;
      background:
        linear-gradient(#e4e4e4, #e4e4e4) right 15px top / 1px 100% no-repeat,
        repeating-linear-gradient(#fff 0 19px, #e8e8e8 19px 20px, #f8f8f8 20px 39px, #e8e8e8 39px 40px);
    }
    .scroll { display: flex; align-items: center; justify-content: space-between; height: 17px; padding: 0 4px 0 6px; background: #f0f0f0; }
    .track { flex: 1; margin: 0 6px; height: 15px; }
    .thumb { width: 52%; height: 15px; background: #cdcdcd; }
    .split { height: 3px; margin-top: 1px; border: 1px solid #a8a8a8; background: var(--bar); }
    details { height: 22px; border-bottom: 2px solid var(--line); }
    summary { display: flex; align-items: center; justify-content: space-between; height: 22px; padding: 0 6px 0 7px; font-size: 14px; line-height: 20px; color: var(--link); }
    summary nx-icon { margin-bottom: 2px; }
  </style>
  <header><h2>部件导航器</h2><button aria-label="最大化"><nx-icon name="panelMax"></nx-icon></button></header>
  <div class="tree">
    <div class="head"><div>名称<nx-icon name="sortUp"></nx-icon></div><span>最</span></div>
    <div class="rows">
      <nx-tree-row focused first sign="+" icons="modelView">模型视图</nx-tree-row>
      <nx-tree-row sign="+" icons="tick camera">摄像机</nx-tree-row>
      <nx-tree-row sign="+" icons="folderEq">用户表达式</nx-tree-row>
      <nx-tree-row icons="folder">非时间戳记几何体</nx-tree-row>
      <nx-tree-row last sign="-" icons="folder">模型历史记录</nx-tree-row>
      <nx-tree-row child dim icons="csys">基准坐标系 (0)</nx-tree-row>
      <nx-tree-row child dim icons="sketch">草图 (1) "SKETCH_0...</nx-tree-row>
      <nx-tree-row child icons="extrude">拉伸 (2)</nx-tree-row>
      <nx-tree-row child icons="chamfer">倒斜角 (3)</nx-tree-row>
      <nx-tree-row child dim icons="sketch">草图 (4) "SKETCH_0...</nx-tree-row>
      <nx-tree-row child last bold icons="extrude">拉伸 (5)</nx-tree-row>
    </div>
    <div class="scroll">
      <button aria-label="向左"><nx-icon name="left"></nx-icon></button>
      <div class="track"><div class="thumb"></div></div>
      <button aria-label="向右"><nx-icon name="right"></nx-icon></button>
    </div>
  </div>
  <div class="split"></div>
  <details><summary>相关性<nx-icon name="chevron"></nx-icon></summary></details>
  <details><summary>细节<nx-icon name="chevron"></nx-icon></summary></details>
  <details><summary>预览<nx-icon name="chevron"></nx-icon></summary></details>
`);

const countersink = `
  <ellipse cx="269" cy="559" rx="120" ry="79" fill="#4a4a4a"/>
  <path d="M149 559A120 79 0 0 1 175 510L222 580L210 603L225 632Q149 610 149 559Z" fill="url(#coneLeft)"/>
  <path d="M175 510A120 79 0 0 1 269 480V566L222 580Z" fill="url(#coneMid)"/>
  <path d="M269 480A120 79 0 0 1 389 559Q389 610 313 632L328 603Q318 570 269 566Z" fill="url(#coneRight)"/>
  <ellipse cx="269" cy="603" rx="59" ry="37" fill="url(#bore)"/>
  <path d="M218 627Q235 609 269 609Q305 609 320 627Q297 639 269 639Q240 639 218 627Z" fill="#dadada"/>`;

define('nx-viewport', `
  <style>
    :host { display: flex; flex-direction: column; flex: 1; min-width: 0; border: solid #8c8c8c; border-width: 0 1px; border-right-color: #ccc; background: #fff; }
    .tabs { display: flex; height: 21px; border-bottom: 2px solid #a8a8a8; }
    .tab { display: flex; align-items: center; gap: 5px; box-sizing: border-box; height: 22px; padding: 0 6px; border: 0; background: var(--teal); color: #fff; font: inherit; font-size: 13px; }
    .tab span { font-size: 12px; }
    .scene { display: block; flex: 1; min-height: 0; width: 100%; background: linear-gradient(#b2b2b2, #c8c8c8 25%, #e0e0e0 55%, #f2f2f2 78%, #fff); }
    text { font: 12px "Noto Sans", sans-serif; }
  </style>
  <div class="tabs">
    <button class="tab"><nx-icon name="part"></nx-icon>锁盖.prt<nx-icon name="edited"></nx-icon><nx-icon name="tabClose"></nx-icon></button>
  </div>
  <svg class="scene" viewBox="274 203 1099 502" preserveAspectRatio="xMinYMax slice">
    <defs>
      <linearGradient id="side"><stop offset="0" stop-color="#141414"/><stop offset=".15" stop-color="#000"/><stop offset=".3" stop-color="#090909"/><stop offset=".65" stop-color="#080808"/><stop offset=".8" stop-color="#131313"/><stop offset="1" stop-color="#1a1a1a"/></linearGradient>
      <linearGradient id="coneLeft"><stop offset="0" stop-color="#2c2c2c"/><stop offset=".5" stop-color="#404040"/><stop offset="1" stop-color="#666"/></linearGradient>
      <linearGradient id="coneMid"><stop offset="0" stop-color="#606060"/><stop offset=".5" stop-color="#8e8e8e"/><stop offset="1" stop-color="#707070"/></linearGradient>
      <linearGradient id="coneRight"><stop offset="0" stop-color="#707070"/><stop offset=".5" stop-color="#484848"/><stop offset="1" stop-color="#282828"/></linearGradient>
      <linearGradient id="bore"><stop offset="0" stop-color="#2a2a2a"/><stop offset=".5" stop-color="#000"/><stop offset="1" stop-color="#222"/></linearGradient>
      <linearGradient id="wall"><stop offset="0" stop-color="#262626"/><stop offset=".35" stop-color="#0c0c0c"/><stop offset=".6" stop-color="#000"/><stop offset="1" stop-color="#161616"/></linearGradient>
      <filter id="soft"><feGaussianBlur stdDeviation="12"/></filter>
      <filter id="grain" x="0" y="0" width="1" height="1"><feTurbulence type="fractalNoise" baseFrequency=".7" numOctaves="2"/><feColorMatrix type="saturate" values="0"/></filter>
    </defs>
    <rect x="274" y="203" width="1099" height="502" filter="url(#grain)" opacity=".07"/>
    <g transform="translate(600 330) scale(.3333)">
      <path d="M53 650C60 780 130 850 250 852L800 740Q900 700 970 640L1200 450Q1250 400 1246 290L700 500Z" fill="#777" opacity=".18" filter="url(#soft)"/>
      <path d="M53 560V650C60 735 160 792 265 792Q300 792 340 783L800 677Q885 652 950 597L1200 362Q1245 318 1245 280V190L650 300Z" fill="url(#side)"/>
      <path d="M53 560C53 520 75 487 105 463L370 228Q430 175 520 153L960 52Q995 43 1030 43C1140 43 1246 108 1246 190C1246 225 1230 247 1200 275L950 507Q885 563 790 590L340 692Q302 702 265 702C150 702 53 632 53 560Z" fill="#575757"/>
      <path d="M352 450C349 420 370 397 400 365L460 300C500 260 550 242 600 235L780 208C880 197 960 240 962 303C948 255 890 214 800 219L605 245C555 252 510 270 470 308L405 378C375 410 358 425 352 450Z" fill="#0a0a0a"/>
      <path d="M487 380C487 310 570 274 650 274C690 274 725 282 751 295L835 256L888 304L810 345C822 370 822 400 810 430C790 470 720 494 655 494C620 494 585 487 557 474L470 511L415 463L495 421C490 410 487 395 487 380Z" fill="url(#wall)"/>
      <path d="M751 295L835 256V331L751 371Z" fill="#141414"/>
      <path d="M835 256L888 304L835 331Z" fill="#070707"/>
      <path d="M495 421C505 385 570 350 645 350C690 350 725 358 751 371L833 333L810 345V430C790 470 720 494 655 494C620 494 585 487 557 474L470 511L495 498Z" fill="#dadada"/>
      <path d="M497 460C530 425 600 405 680 412Q770 422 790 448L810 430V345L751 371C690 340 540 340 495 421Z" fill="#cecece" opacity=".5"/>
      ${countersink}
      <g transform="translate(764 -376)">${countersink}</g>
    </g>
    <path d="M294 641l15-7 11 7v16l-14 7-12-9z" fill="#c8c8c8" stroke="#8a8a8a"/>
    <path d="M294 641l13 7 13-7M307 648l-1 16M309 634l-2 14" fill="none" stroke="#999"/>
    <path d="M319 657l-18-16" stroke="#d28c8c" stroke-width="2"/>
    <path d="M319.500 657v-17" stroke="#1a2ea8" stroke-width="2"/><path d="M317 642l2.500-7 2.500 7z" fill="#1a2ea8"/>
    <path d="M318 658l-16 8" stroke="#2c8a2c" stroke-width="2"/><path d="M303 663l-7 6 9-2z" fill="#2c8a2c"/>
    <circle cx="319.500" cy="657" r="4" fill="#c9c9c9" stroke="#999" stroke-width=".5"/>
    <text x="316" y="634" fill="#2340d8">Z</text>
    <text x="288" y="675" fill="#2c8a2c">Y</text>
    <text x="294" y="641" fill="#c03838" style="font-size: 10px">X</text>
  </svg>
`);

define('nx-watermark', `
  <style>
    :host { display: flex; gap: 12px; color: #fff; pointer-events: none; }
    svg { opacity: .9; }
    .words { width: 175px; opacity: .5; }
    .words > * { display: block; white-space: nowrap; }
    b { font-size: 40px; line-height: 58px; }
    span { font-size: 14px; line-height: 20px; font-weight: bold; }
  </style>
  <svg width="72" height="82" viewBox="0 0 72 82">
    <path d="M36 0l36 20v42L36 82 0 62V20z" fill="#72cdf6"/>
    <path d="M36 0l15 8c7 12 6 24 5 31L36 27l-20 12L0 48V20z" fill="#a5dcf6"/>
    <path d="M14 13L36 0l15 8c6 10 6 20 5 28C44 17 32 12 14 13z" fill="#c8e9f8"/>
    <path d="M72 34v28L56 70c-10 0-16-2-20-6l20-11c8-4 13-10 16-19z" fill="#5cbdee"/>
    <path d="M0 48c3-9 9-14 16-17v22c1 9 5 18 12 26L0 62z" fill="#8ed5f5"/>
    <path d="M16 31l20-12 20 12v22L36 65 16 53z" fill="#fff"/>
    <path d="M20 32l16-9 16 9-16 9z" fill="#a8dcf5"/>
    <path d="M20 32l16 9v19l-16-9z" fill="#83cef2"/>
    <path d="M52 32l-16 9v19l16-9z" fill="#59b9e8"/>
    <path d="M20 32l16 9 16-9M36 41v19" fill="none" stroke="#fff"/>
    <path d="M0 48c3-9 9-14 16-17M14 13c18-1 30 4 42 23M51 8c6 10 6 20 5 31v14c8-4 13-10 16-19M56 70c-10 0-16-2-20-6M16 53c1 9 5 18 12 26" fill="none" stroke="#fff"/>
  </svg>
  <div class="words"><b>3D世界网</b><span>WWW.3DSJW.COM</span></div>
`);

define('nx-status-bar', `
  <style>
    :host { display: flex; align-items: center; justify-content: flex-end; gap: 4px; box-sizing: border-box; height: 22px; padding-right: 55px; border-top: 1px solid #a0a0a0; background: #fff; }
  </style>
  <nx-icon name="flags"></nx-icon>
  <nx-icon name="fullscreen"></nx-icon>
`);

// Sliver of the window lying behind the application.
define('nx-backdrop', `
  <style>
    :host { display: flex; flex-direction: column; width: 8px; background: linear-gradient(90deg, #f4f4f4, #e8e8e8); overflow: hidden; }
    .top { height: 125px; border-bottom: 1px solid #aaa; }
    .thumb { width: 6px; height: 25px; margin-top: 24px; background: #c1c1c1; }
    .up, .down { display: block; }
    .up { margin-top: 6px; }
    .down { margin: auto 0 9px; }
    .box { display: flex; align-items: center; box-sizing: border-box; height: 24px; border: 1px solid #8fb5d6; border-left: 0; background: #fff; }
  </style>
  <div class="top"></div>
  <svg class="up" width="4" height="4"><path d="M0 0l3 4H0z" fill="#333"/></svg>
  <div class="thumb"></div>
  <svg class="down" width="4" height="4"><path d="M0 0h3L0 4z" fill="#333"/></svg>
  <div class="box"><svg width="4" height="8"><path d="M0 6l3-5" stroke="#1c72c4" stroke-width="2"/></svg></div>
`);

define('nx-desktop', `
  <style>
    :host { display: flex; flex-direction: column; height: 100vh; }
    .screen { display: flex; flex: 1; min-height: 0; }
    .app { position: relative; display: flex; flex-direction: column; flex: 1; min-width: 0; }
    .work { display: flex; flex: 1; min-height: 0; }
    nx-watermark { position: absolute; right: 24px; bottom: 5px; }
    .taskbar { display: flex; justify-content: flex-end; height: 8px; padding-right: 25px; background: #000; color: #fff; overflow: hidden; }
    time { padding-top: 2px; }
  </style>
  <div class="screen">
    <nx-backdrop></nx-backdrop>
    <main class="app">
      <nx-quick-bar></nx-quick-bar>
      <nx-tab-bar></nx-tab-bar>
      <nx-ribbon></nx-ribbon>
      <nx-selection-bar></nx-selection-bar>
      <div class="work">
        <nx-resource-rail></nx-resource-rail>
        <nx-navigator></nx-navigator>
        <nx-viewport></nx-viewport>
      </div>
      <nx-status-bar></nx-status-bar>
      <nx-watermark></nx-watermark>
    </main>
  </div>
  <div class="taskbar"><time>18:45</time></div>
`);
</script>
</body>
</html>
